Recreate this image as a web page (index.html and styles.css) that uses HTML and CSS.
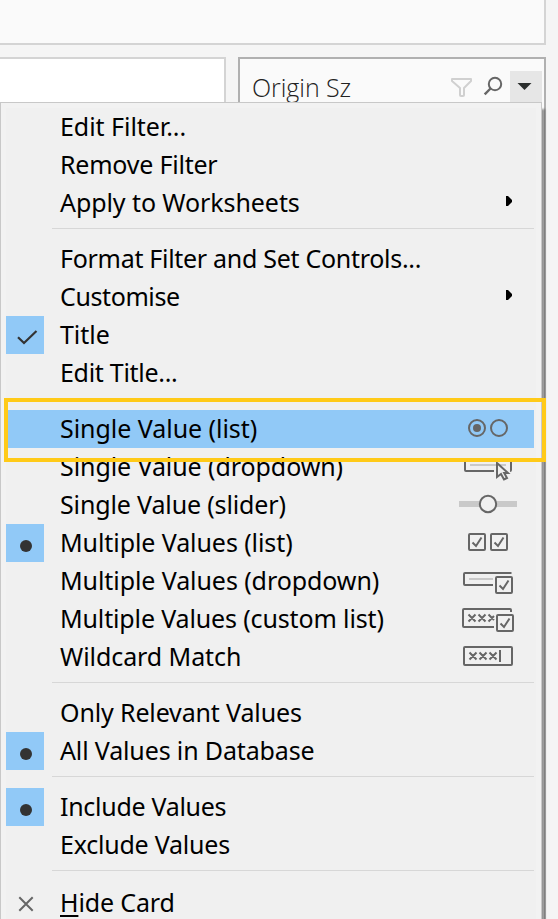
FILE: index.html
```html
<!DOCTYPE html>
<html lang="en">
<head>
<meta charset="utf-8">
<title>Filter card menu</title>
<link rel="stylesheet" href="styles.css">
</head>
<body>
<div class="workspace">
  <div class="shelf"></div>
  <div class="cards">
    <div class="sheet"></div>
    <div class="filter-card">
      <span class="filter-title">Origin Sz</span>
      <svg class="tool" width="24" height="24" viewBox="0 0 24 24"><path d="M3 4H22V6L15 13V20Q15 21 14 21H12Q11 21 11 20V13L3 6Z" fill="none" stroke="#d0d0d0" stroke-width="2" stroke-linejoin="round"/></svg>
      <svg class="tool search" width="24" height="24" viewBox="0 0 24 24"><g fill="none" stroke="#666" stroke-width="2"><circle cx="14" cy="10" r="6.2"/><path d="M9.5 14.5L3.7 20.3" stroke-width="2.4"/></g></svg>
      <span class="caret"><svg width="32" height="32" viewBox="0 0 32 32"><path d="M7.5 12H21.5L14.5 19Z" fill="#2b2e2d"/></svg></span>
    </div>
  </div>
</div>

<div class="menu">
  <div class="item"><span class="mark"></span><span class="label">Edit Filter...</span></div>
  <div class="item"><span class="mark"></span><span class="label tight-3">Remove Filter</span></div>
  <div class="item"><span class="mark"></span><span class="label tight-1">Apply to Worksheets</span><svg class="icon" viewBox="0 0 72 38"><path d="M50 12H52L56 16V18L52 22H50Z"/></svg></div>
  <div class="sep"></div>
  <div class="item"><span class="mark"></span><span class="label tight-4">Format Filter and Set Controls...</span></div>
  <div class="item"><span class="mark"></span><span class="label tight-5">Customise</span><svg class="icon" viewBox="0 0 72 38"><path d="M50 12H52L56 16V18L52 22H50Z"/></svg></div>
  <div class="item"><span class="mark on"><svg width="38" height="38" viewBox="0 0 38 38"><path d="M12 21.2L18 27L30.5 15" fill="none" stroke="#333" stroke-width="2.2"/></svg></span><span class="label">Title</span></div>
  <div class="item"><span class="mark"></span><span class="label tight-4">Edit Title...</span></div>
  <div class="sep"></div>
  <div class="item selected"><span class="mark"></span><span class="label">Single Value (list)</span><svg class="icon line" viewBox="0 0 72 38"><circle cx="21" cy="18" r="8"/><circle cx="21" cy="18" r="4" class="solid"/><circle cx="43" cy="18" r="8"/></svg></div>
  <div class="item"><span class="mark"></span><span class="label tight-1">Single Value (dropdown)</span><svg class="icon line" viewBox="0 0 72 38"><path d="M38 23H10Q9 23 9 22V12H55V22Q55 23 54 23"/><path class="pale" d="M14 17H50"/><path class="cursor" d="M41 15V29L45 26L48 31.5L51 30L48.2 25H52Z"/></svg></div>
  <div class="item"><span class="mark"></span><span class="label tight-2">Single Value (slider)</span><svg class="icon line" viewBox="0 0 72 38"><path class="track" d="M3 18H61"/><circle class="knob" cx="32" cy="18" r="8.2"/></svg></div>
  <div class="item"><span class="mark on"><i class="dot"></i></span><span class="label tight-1">Multiple Values (list)</span><svg class="icon line" viewBox="0 0 72 38"><rect x="13" y="10" width="16" height="16" rx="1"/><path d="M16.5 18.5L20 22L25.5 13.5"/><rect x="35" y="10" width="16" height="16" rx="1"/><path d="M38.5 18.5L42 22L47.5 13.5"/></svg></div>
  <div class="item"><span class="mark"></span><span class="label tight-1">Multiple Values (dropdown)</span><svg class="icon line" viewBox="0 0 72 38"><path d="M54.5 12V11H9Q8 11 8 12V22Q8 23 9 23H37"/><path class="pale" d="M13 17H37"/><rect x="40" y="15" width="16" height="16" rx="1"/><path d="M43.5 23.5L47 27L52.5 18.5"/></svg></div>
  <div class="item"><span class="mark"></span><span class="label tight-2">Multiple Values (custom list)</span><svg class="icon line" viewBox="0 0 72 38"><path d="M55 12V10Q55 9 54 9H8Q7 9 7 10V26Q7 27 8 27H38"/><path d="M12.5 14.5L19.5 21.5M19.5 14.5L12.5 21.5M22.5 14.5L29.5 21.5M29.5 14.5L22.5 21.5M32.5 14.5L38 20M38 16L32.5 21.5"/><rect x="41" y="15" width="16" height="16" rx="1"/><path d="M44.5 23.5L48 27L53.5 18.5"/></svg></div>
  <div class="item"><span class="mark"></span><span class="label tight-1">Wildcard Match</span><svg class="icon line" viewBox="0 0 72 38"><rect x="8" y="9" width="48" height="18" rx="1"/><path d="M13.5 14.5L20.5 21.5M20.5 14.5L13.5 21.5M23.5 14.5L30.5 21.5M30.5 14.5L23.5 21.5M33.5 14.5L40.5 21.5M40.5 14.5L33.5 21.5M44 12V24"/></svg></div>
  <div class="sep"></div>
  <div class="item"><span class="mark"></span><span class="label tight-2">Only Relevant Values</span></div>
  <div class="item"><span class="mark on"><i class="dot"></i></span><span class="label tight-2">All Values in Database</span></div>
  <div class="sep"></div>
  <div class="item"><span class="mark on"><i class="dot"></i></span><span class="label tight-4">Include Values</span></div>
  <div class="item"><span class="mark"></span><span class="label tight-3">Exclude Values</span></div>
  <div class="sep last"></div>
  <div class="item"><span class="mark"><svg width="38" height="38" viewBox="0 0 38 38"><path d="M13.3 13.3L26.7 26.7M26.7 13.3L13.3 26.7" fill="none" stroke="#666" stroke-width="2"/></svg></span><span class="label tight-2"><span class="key">H</span>ide Card</span></div>
</div>
<div class="callout"></div>
</body>
</html>
```
FILE: styles.css
```css
* { box-sizing: border-box; }
body {
  margin: 0;
  height: 919px;
  overflow: hidden;
  position: relative;
  background: #f5f5f5;
  font-family: "Noto Sans", sans-serif;
  color: #000;
}
svg { display: block; }
.workspace { width: 546px; height: 919px; display: flex; flex-direction: column; gap: 12px; }
.shelf { height: 45px; background: #fafafa; border: solid #d4d4d4; border-width: 0 2px 2px 0; }
.cards { flex: 1; display: flex; gap: 12px; }
.sheet { width: 226px; background: #fff; border: solid #d4d4d4; border-width: 2px 2px 0 0; }
.filter-card {
  flex: 1;
  display: flex;
  align-items: flex-start;
  padding: 12px 2px 0 12px;
  background: #fafafa;
  border: 2px solid #b0b0b0;
  border-bottom: 0;
}
.filter-title {
  flex: 1;
  font: 300 25px/32px "Open Sans", sans-serif;
  letter-spacing: -0.05px;
  color: #222;
  white-space: nowrap;
}
.tool { margin: 4px 0 0; }
.search { margin: 3px 5px 0 8px; }
.caret { width: 32px; height: 32px; background: #e6e6e6; }

.menu {
  position: absolute;
  left: 0;
  top: 102px;
  width: 542px;
  height: 830px;
  padding: 5px;
  background: #f0f0f0;
  border: 1px solid #c8c8c8;
  box-shadow: inset 0 0 0 5px #f2f2f2, 4px 6px 2px -1px rgba(0, 0, 0, 0.4);
}
.item { height: 38px; display: flex; align-items: center; }
.mark { width: 38px; height: 38px; flex: none; display: flex; align-items: center; justify-content: center; }
.on { background: #91c9f7; }
.dot { width: 12px; height: 12px; margin: 6px 0 0 2px; border-radius: 50%; background: #333; }
.label { flex: 1; padding: 0 0 2px 16px; font-size: 25px; line-height: 36px; letter-spacing: -0.04px; white-space: nowrap; }
.tight-1 { letter-spacing: -0.08px; }
.tight-2 { letter-spacing: -0.14px; }
.tight-3 { letter-spacing: -0.22px; }
.tight-4 { letter-spacing: -0.29px; }
.tight-5 { letter-spacing: -0.4px; }
.icon { width: 72px; height: 38px; margin-right: 8px; flex: none; }
.line { fill: none; stroke: #666; stroke-width: 2; }
.line .solid { fill: #666; stroke: none; }
.line .pale { stroke: #c9c9c9; }
.line .track { stroke: #c9c9c9; stroke-width: 6; }
.line .knob, .line .cursor { fill: #f0f0f0; }
.selected { margin: 0 2px; background: #91c9f7; }
.selected + .item { margin-top: 0; }
.selected .mark { width: 36px; }
.selected .icon { margin-right: 6px; }
.sep { height: 18px; padding-top: 6px; margin: 0 2px 0 46px; }
.sep::before { content: ""; display: block; height: 1px; background: #d7d7d7; }
.last { height: 20px; }
.key { text-decoration: underline; text-underline-offset: 3px; text-decoration-thickness: 2px; text-decoration-skip-ink: none; }

.callout {
  position: absolute;
  left: 4px;
  top: 398px;
  width: 542px;
  height: 64px;
  border: 4px solid #ffca18;
}
```
